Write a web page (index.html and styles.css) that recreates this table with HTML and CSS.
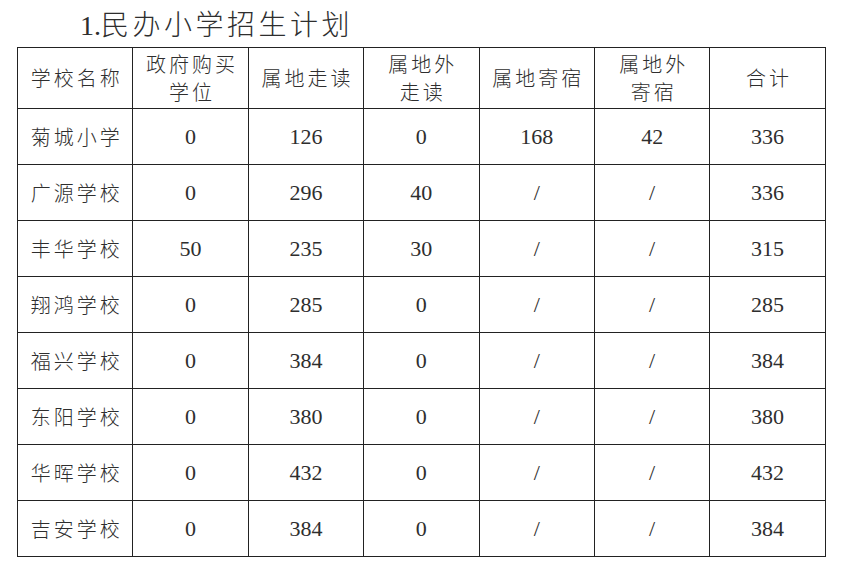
FILE: index.html
```html
<!DOCTYPE html>
<html lang="zh">
<head>
<meta charset="utf-8">
<link rel="stylesheet" href="styles.css">
</head>
<body>
<div class="page">
  <h1 class="title"><span class="num">1.</span>民办小学招生计划</h1>
  <table class="plan">
    <colgroup>
      <col class="c1"><col class="c2"><col class="c3"><col class="c4"><col class="c5"><col class="c6"><col class="c7">
    </colgroup>
    <thead>
      <tr>
        <th>学校名称</th>
        <th>政府购买<br>学位</th>
        <th>属地走读</th>
        <th>属地外<br>走读</th>
        <th>属地寄宿</th>
        <th>属地外<br>寄宿</th>
        <th>合计</th>
      </tr>
    </thead>
    <tbody>
      <tr><td class="name">菊城小学</td><td>0</td><td>126</td><td>0</td><td>168</td><td>42</td><td>336</td></tr>
      <tr><td class="name">广源学校</td><td>0</td><td>296</td><td>40</td><td>/</td><td>/</td><td>336</td></tr>
      <tr><td class="name">丰华学校</td><td>50</td><td>235</td><td>30</td><td>/</td><td>/</td><td>315</td></tr>
      <tr><td class="name">翔鸿学校</td><td>0</td><td>285</td><td>0</td><td>/</td><td>/</td><td>285</td></tr>
      <tr><td class="name">福兴学校</td><td>0</td><td>384</td><td>0</td><td>/</td><td>/</td><td>384</td></tr>
      <tr><td class="name">东阳学校</td><td>0</td><td>380</td><td>0</td><td>/</td><td>/</td><td>380</td></tr>
      <tr><td class="name">华晖学校</td><td>0</td><td>432</td><td>0</td><td>/</td><td>/</td><td>432</td></tr>
      <tr><td class="name">吉安学校</td><td>0</td><td>384</td><td>0</td><td>/</td><td>/</td><td>384</td></tr>
    </tbody>
  </table>
</div>
</body>
</html>
```

FILE: styles.css
```css
html, body {
  margin: 0;
  padding: 0;
  background: #ffffff;
}
.page {
  padding: 8px 0 0 17px;
  color: #2e2e2e;
  font-family: "Liberation Serif", "Noto Sans CJK SC", serif;
}
.title {
  margin: 0 0 4px 63px;
  height: 35px;
  line-height: 35px;
  font-size: 28px;
  font-weight: 300;
  letter-spacing: 3.5px;
  font-family: "Liberation Serif", "Noto Sans CJK SC", serif;
}
.title .num {
  letter-spacing: 0;
}
.plan {
  border-collapse: collapse;
  width: 808px;
  table-layout: fixed;
}
.plan col { width: 115.4px; }
.plan th, .plan td {
  border: 1px solid #222;
  text-align: center;
  padding: 0;
  font-weight: 300;
}
.plan th {
  height: 60px;
  font-size: 20px;
  line-height: 28px;
  letter-spacing: 3px;
  font-family: "Noto Sans CJK SC", sans-serif;
  padding-left: 3px;
}
.plan td {
  height: 55px;
  font-size: 22px;
  font-family: "Liberation Serif", "Noto Sans CJK SC", serif;
}
.plan td.name {
  font-size: 20px;
  letter-spacing: 3px;
  padding-left: 3px;
  font-family: "Noto Sans CJK SC", sans-serif;
}
```
